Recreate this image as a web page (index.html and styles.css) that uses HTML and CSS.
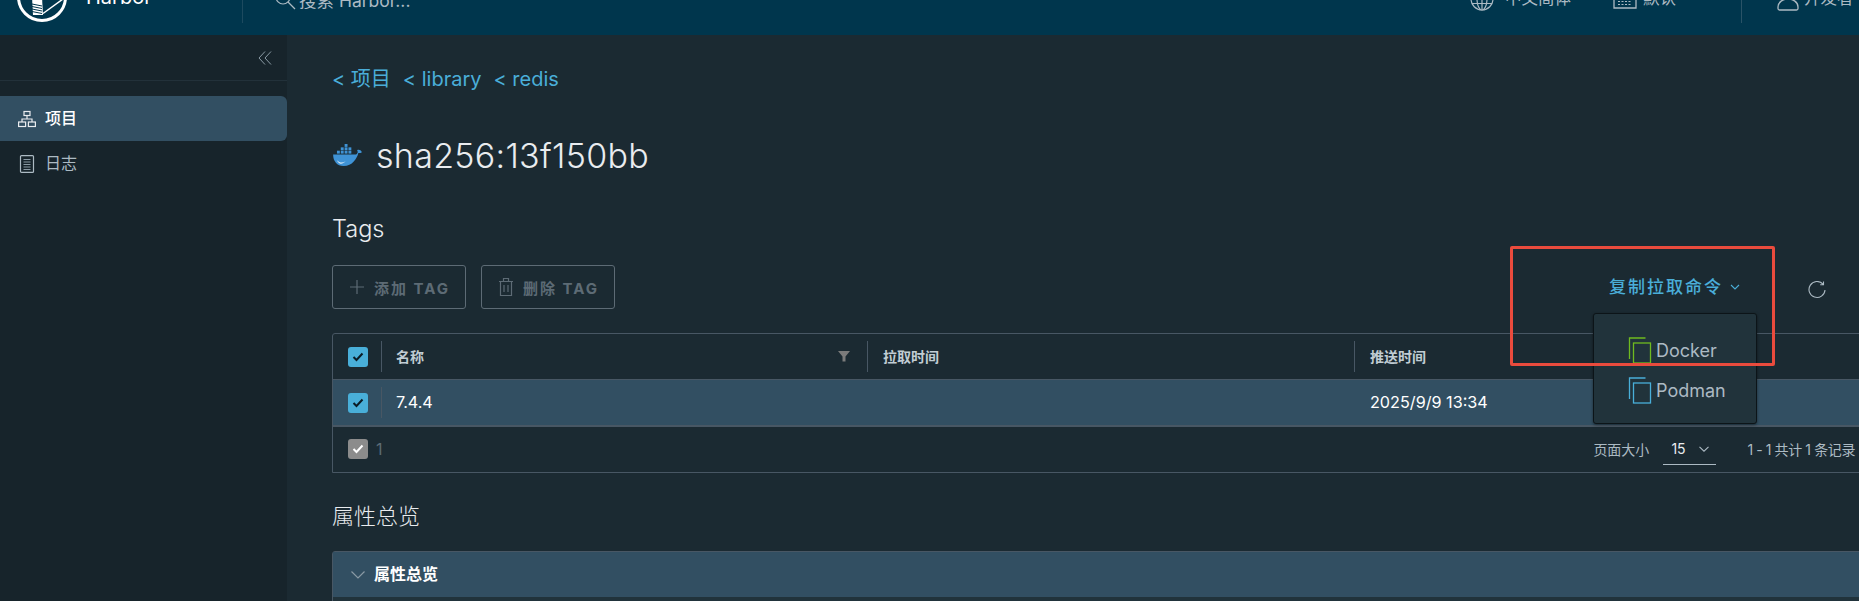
FILE: index.html
```html
<!DOCTYPE html>
<html lang="zh">
<head>
<meta charset="utf-8">
<title>Harbor</title>
<link rel="stylesheet" href="styles.css">
</head>
<body>
<header class="top">
  <div class="brand">
    <svg class="logo" viewBox="0 0 50 23"><circle cx="25" cy="-3" r="23.500" fill="none" stroke="#fff" stroke-width="3"/><path d="M15 -3h10l1 18h-10z" fill="#fff"/><path d="M15 4l10 2M15 6.500l10 2M15 9l10 2M15 11.500l10 2" stroke="#00364d" stroke-width="1"/><path d="M26 13.500L46 -1" stroke="#fff" stroke-width="1.500"/></svg>
    <span class="brand-name">Harbor</span>
  </div>
  <div class="search">
    <svg class="search-icon" viewBox="0 0 22 10"><circle cx="8" cy="-3" r="7" fill="none" stroke="#acbac3" stroke-width="1.200"/><path d="M13 2l7 7" stroke="#acbac3" stroke-width="1.200"/></svg>
    <span>搜索 Harbor...</span>
  </div>
  <div class="top-right">
    <div class="top-item lang">
      <svg class="top-icon" viewBox="0 -13 24 24"><g fill="none" stroke="#acbac3" stroke-width="1.200"><circle cx="12" cy="-1" r="11"/><ellipse cx="12" cy="-1" rx="5" ry="11"/><path d="M2 3.500h20M12 -12v21"/></g></svg>
      <span>中文简体</span><i class="top-caret"></i>
    </div>
    <div class="top-item cal">
      <svg class="top-icon" viewBox="0 -13 24 24"><path d="M1 -12V8h22V-12" fill="none" stroke="#acbac3" stroke-width="1.300"/><path d="M5 1.500h14M5 4.500h14" stroke="#acbac3" stroke-width="1.200" stroke-dasharray="2 1.500"/></svg>
      <span>默认</span><i class="top-caret"></i>
    </div>
    <div class="top-sep"></div>
    <div class="top-item user">
      <svg class="user-icon" viewBox="0 -5 22 16"><path d="M2.500 10H19.500Q21 10 21 8.500V7C21 2 16 -1 11 -1S1 2 1 7V8.500Q1 10 2.500 10z" fill="none" stroke="#acbac3" stroke-width="1.300"/></svg>
      <span>开发者</span>
    </div>
  </div>
</header>

<main class="main">
  <aside class="side">
    <div class="collapse">
      <svg class="collapse-icon" viewBox="0 0 14 14"><path d="M7 .5L1 7l6 6.500M13 .5L7 7l6 6.500" fill="none" stroke="#8a9aa4" stroke-width="1"/></svg>
    </div>
    <nav class="nav">
      <a class="nav-item active">
        <svg class="nav-icon" viewBox="0 0 18 18"><g fill="none" stroke="#e9ecef" stroke-width="1.200"><rect x="6" y="1.500" width="6" height="4"/><rect x=".6" y="12" width="7" height="4.500"/><rect x="10.400" y="12" width="7" height="4.500"/><path d="M9 5.500v3.500M4 12V9h10v3"/></g></svg>
        <span>项目</span>
      </a>
      <a class="nav-item">
        <svg class="nav-icon" viewBox="0 0 18 18"><rect x="2.500" y=".6" width="13" height="16.800" rx="1" fill="none" stroke="#acbac3" stroke-width="1.200"/><path d="M5.500 4.500h7M5.500 7h7M5.500 9.500h7M5.500 12h7M5.500 14.500h7" stroke="#8a9aa4" stroke-width="1"/></svg>
        <span>日志</span>
      </a>
    </nav>
  </aside>

  <section class="content">
    <div class="crumbs"><a>&lt; 项目</a><a>&lt; library</a><a>&lt; redis</a></div>

    <h1 class="title">
      <svg class="whale" viewBox="0 0 32 24"><g fill="#3f93d6"><path d="M1 11h23c1 0 2-.6 2.500-2 .3-1 0-2-.5-2.500 1-.8 2.500-.6 3.500 0 .8.600 1.300 1.300 1.500 2-1 .8-2.500 1-3.700.8C26 15 21 23 12 23 5 23 1 18 1 11z"/><rect x="5" y="7" width="3" height="3"/><rect x="9" y="7" width="3" height="3"/><rect x="13" y="7" width="3" height="3"/><rect x="17" y="7" width="3" height="3"/><rect x="9" y="3.500" width="3" height="3"/><rect x="13" y="3.500" width="3" height="3"/><rect x="17" y="3.500" width="3" height="3"/><rect x="13" y="0" width="3" height="3"/></g><path d="M5 17c3 3 6 3 9 1-3 3-7 4-9-1z" fill="#dfeef8"/></svg>
      <span>sha256:13f150bb</span>
    </h1>

    <h2 class="sub tags-title">Tags</h2>

    <div class="toolbar">
      <button class="btn"><svg class="btn-icon" viewBox="0 0 16 16"><path d="M8 1v14M1 8h14" stroke="#5d6b75" stroke-width="1.200"/></svg><span>添加 TAG</span></button>
      <button class="btn"><svg class="btn-icon trash" viewBox="0 0 16 20"><path d="M1 4.500h14M5.500 4.500V1.500h5v3M2.500 4.500V18.500h11V4.500M6 8v7M10 8v7" fill="none" stroke="#5d6b75" stroke-width="1.200"/></svg><span>删除 TAG</span></button>
      <div class="pull">
        <span class="pull-label">复制拉取命令</span>
        <svg class="pull-chev" viewBox="0 0 10 6"><path d="M1 1l4 4 4-4" fill="none" stroke="#4aaed9" stroke-width="1.100"/></svg>
        <div class="menu">
          <div class="menu-item">
            <svg class="copy" viewBox="0 0 23 27"><g fill="none" stroke="#6fba1f" stroke-width="1.300"><path d="M17 1H1v21"/><rect x="5" y="6" width="17" height="20"/></g></svg>
            <span>Docker</span>
          </div>
          <div class="menu-item">
            <svg class="copy" viewBox="0 0 23 27"><g fill="none" stroke="#49afd9" stroke-width="1.300"><path d="M17 1H1v21"/><rect x="5" y="6" width="17" height="20"/></g></svg>
            <span>Podman</span>
          </div>
        </div>
      </div>
      <svg class="refresh" viewBox="0 0 18 18"><path d="M15 3.200A8 8 0 1 0 17 9M15.500 .5v3.300h-3.300" fill="none" stroke="#acbac3" stroke-width="1.100"/></svg>
    </div>

    <div class="table">
      <div class="row head">
        <div class="cell check"><span class="box"><svg viewBox="0 0 20 20"><path d="M5.500 10l3 3 6-6.500" fill="none" stroke="#0b1c26" stroke-width="2"/></svg></span></div>
        <div class="cell name">名称<svg class="filter" viewBox="0 0 12 12"><path d="M0 1h12L7.500 6.500V11.500h-3V6.500z" fill="#7b7b7b"/></svg></div>
        <div class="cell">拉取时间</div>
        <div class="cell">推送时间</div>
      </div>
      <div class="row selected">
        <div class="cell check"><span class="box"><svg viewBox="0 0 20 20"><path d="M5.500 10l3 3 6-6.500" fill="none" stroke="#0b1c26" stroke-width="2"/></svg></span></div>
        <div class="cell tag-name">7.4.4</div>
        <div class="cell"></div>
        <div class="cell">2025/9/9 13:34</div>
      </div>
      <div class="foot">
        <span class="box gray"><svg viewBox="0 0 20 20"><path d="M5.500 10l3 3 6-6.500" fill="none" stroke="#fff" stroke-width="2"/></svg></span>
        <span class="count">1</span>
        <span class="page-label">页面大小</span>
        <span class="page-select">15<svg viewBox="0 0 10 6"><path d="M.5 .8L5 5.200 9.500 .8" fill="none" stroke="#acbac3" stroke-width="1.100"/></svg></span>
        <span class="page-total">1 - 1 共计 1 条记录</span>
      </div>
    </div>

    <h2 class="sub attr-title">属性总览</h2>

    <div class="panel">
      <div class="panel-head">
        <svg class="panel-chev" viewBox="0 0 14 8"><path d="M.5 .5L7 7l6.500-6.500" fill="none" stroke="#8a9aa4" stroke-width="1.200"/></svg>
        <span class="panel-title">属性总览</span>
      </div>
    </div>
  </section>

  <div class="callout"></div>
</main>
</body>
</html>
```

FILE: styles.css
```css
* { box-sizing: border-box; }
html, body { margin: 0; height: 601px; overflow: hidden; }
body {
  background: #1b2a32;
  color: #acbac3;
  font-family: "Inter", "Noto Sans CJK SC", sans-serif;
  width: 1859px;
}
svg { display: block; flex: none; }

.top {
  height: 35px;
  background: #00364d;
  display: flex;
  align-items: flex-end;
  overflow: hidden;
}
.brand { width: 243px; height: 23px; display: flex; align-items: flex-end; padding-left: 17px; border-right: 1px solid #1d4a5f; margin-bottom: 12px; }
.logo { width: 50px; height: 23px; }
.brand-name { color: #fff; font-size: 20px; line-height: 24px; margin-left: 19px; margin-bottom: 14px; }
.search { display: flex; align-items: flex-end; margin-left: 32px; margin-bottom: 25px; font-size: 17.500px; line-height: 18px; gap: 2px; height: 10px; }
.search-icon { width: 22px; height: 10px; }
.top-right { margin-left: auto; display: flex; align-items: flex-end; }
.top-item { display: flex; align-items: flex-end; font-size: 16.500px; line-height: 20px; }
.top-icon { width: 24px; height: 24px; margin-bottom: 24px; }
.top-item span { margin-bottom: 27px; }
.lang span { margin-left: 11px; width: 66px; }
.cal { margin-left: 24px; }
.cal span { margin-left: 6px; width: 36px; }
.top-caret { width: 4px; height: 1px; margin-left: 14px; margin-bottom: 35px; background: #acbac3; }
.top-sep { width: 1px; height: 23px; background: #2a5367; margin: 0 35px 12px 44px; }
.user { width: 82px; }
.user-icon { width: 22px; height: 16px; margin-bottom: 24px; }
.user span { margin-left: 5px; white-space: nowrap; }

.main { position: relative; display: flex; height: 566px; }
.side { width: 287px; flex: none; background: #17242b; }
.collapse { height: 46px; border-bottom: 1px solid #22313a; display: flex; align-items: center; justify-content: flex-end; padding: 0 15px 0 0; }
.collapse-icon { width: 14px; height: 14px; }
.nav { padding-top: 15px; display: flex; flex-direction: column; }
.nav-item { height: 45px; display: flex; align-items: center; padding: 0 0 3px 18px; gap: 9px; font-size: 16px; color: #acbac3; }
.nav-item.active { background: #324f62; color: #fff; font-weight: 500; border-radius: 0 6px 6px 0; }
.nav-icon { width: 18px; height: 18px; margin-top: 3px; }

.content { flex: 1; min-width: 0; padding-left: 45px; overflow: hidden; }
.crumbs { margin-top: 32px; height: 24px; display: flex; gap: 12px; font-size: 20px; line-height: 24px; color: #4aaed9; }
.title { margin: 42px 0 0; height: 44px; display: flex; align-items: center; gap: 13px; font-size: 34px; font-weight: 300; letter-spacing: .3px; color: #e9ecef; }
.whale { width: 31px; height: 23px; }
.sub { margin: 0; font-weight: 300; color: #e9ecef; }
.tags-title { margin-top: 40px; font-size: 23.500px; line-height: 24px; }

.toolbar { margin-top: 24px; height: 44px; display: flex; align-items: center; gap: 15px; padding-right: 33px; }
.btn { height: 44px; width: 134px; background: none; border: 1px solid #5d6b75; border-radius: 3px; display: flex; align-items: center; justify-content: center; gap: 9px; padding: 0 0 0 1px; color: #5d6b75; font: 700 15px "Inter", "Noto Sans CJK SC", sans-serif; letter-spacing: 2px; }
.btn-icon { width: 16px; height: 16px; }
.btn-icon.trash { width: 16px; height: 20px; }
.pull { position: relative; margin-left: auto; margin-right: 53px; display: flex; align-items: center; gap: 7px; color: #4aaed9; }
.pull-label { font-size: 17px; font-weight: 500; letter-spacing: 2px; line-height: 20px; }
.pull-chev { width: 10px; height: 6px; }
.refresh { width: 18px; height: 18px; margin-top: 5px; }

.menu { position: absolute; z-index: 2; left: -16px; top: 36px; width: 164px; height: 111px; padding: 16px 0 0 34px; background: #21333b; border: 1px solid #0c1418; border-radius: 3px; box-shadow: 0 1px 3px rgba(0,0,0,.5); }
.menu-item { height: 40px; display: flex; align-items: center; gap: 4px; font-size: 18px; color: #acbac3; }
.copy { width: 24px; height: 27px; }

.table { margin-top: 24px; width: 1540px; height: 140px; border: 1px solid #485764; border-radius: 3px 3px 0 0; }
.row { display: grid; grid-template-columns: 48px 486px 487px 1fr; align-items: center; }
.head { height: 45px; padding-bottom: 1px; font-size: 14px; font-weight: 700; color: #c1cdd4; }
.head .check { padding-top: 1px; }
.selected { height: 48px; background: #324f62; border-top: 1px solid #485764; border-bottom: 2px solid #485764; color: #fff; font-size: 16.200px; }
.cell { height: 31px; line-height: 31px; padding-left: 15px; border-left: 1px solid #485764; }
.cell.check { border-left: 0; padding-left: 15px; display: flex; align-items: center; }
.selected .cell:nth-child(n+3) { border-left-color: transparent; }
.cell.name { display: flex; justify-content: space-between; align-items: center; padding: 0 17px 0 14px; }
.cell.tag-name { padding-left: 14px; }
.filter { width: 12px; height: 12px; }
.box { width: 20px; height: 20px; background: #49afd9; border-radius: 3px; display: block; }
.box.gray { background: #8c8c8c; }
.foot { height: 45px; display: flex; align-items: center; padding: 0 16px 1px 15px; font-size: 14px; color: #acbac3; }
.count { margin-left: 8px; font-size: 16px; color: #5d6b75; }
.page-label { margin-left: auto; }
.page-select { margin-left: 14px; width: 53px; height: 31px; display: flex; align-items: center; gap: 13px; padding-left: 8px; border-bottom: 1px solid #acbac3; color: #e9ecef; }
.page-select svg { width: 10px; height: 6px; }
.page-total { margin-left: 31px; letter-spacing: -.4px; }

.attr-title { margin-top: 28px; font-size: 22px; line-height: 30px; }
.panel { margin-top: 20px; width: 1540px; height: 60px; background: #21333b; border: 1px solid #485764; border-radius: 3px 3px 0 0; }
.panel-head { height: 45px; background: #324f62; display: flex; align-items: center; gap: 9px; padding-left: 18px; color: #fff; font-size: 16px; font-weight: 700; }
.panel-title { margin-bottom: 3px; }
.panel-chev { width: 14px; height: 8px; }

.callout { position: absolute; z-index: 3; left: 1510px; top: 211px; width: 265px; height: 120px; border: 3px solid #ea4b3d; border-radius: 2px; pointer-events: none; }
```
